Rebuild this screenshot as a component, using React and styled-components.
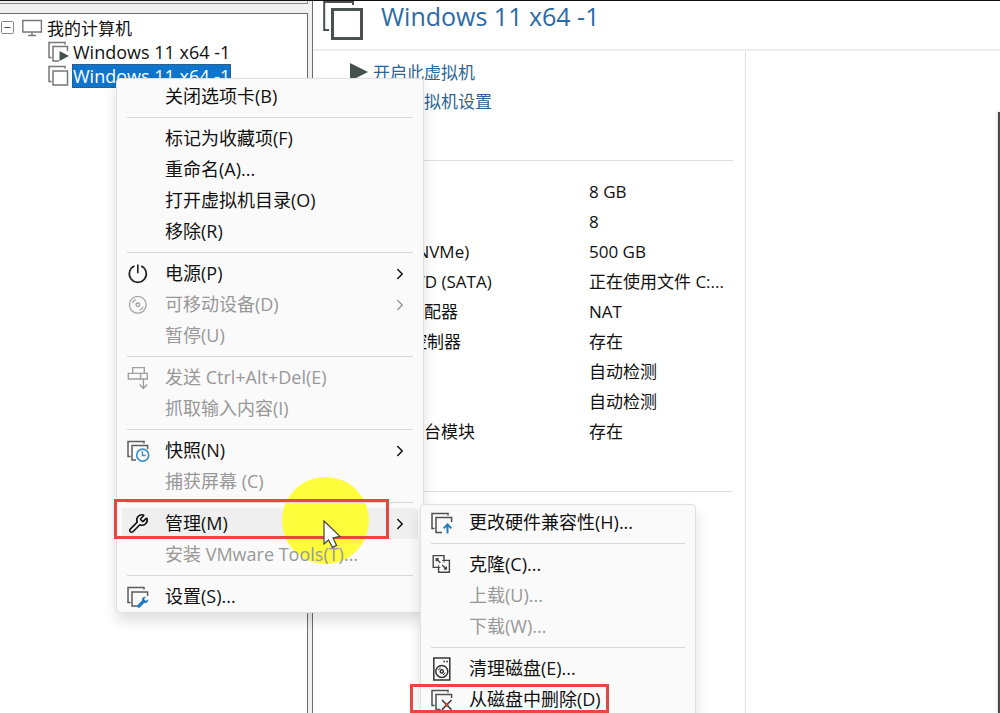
import styled, { createGlobalStyle, css } from 'styled-components';
import { ChevronRight, Wrench } from 'lucide-react';

const GlobalStyle = createGlobalStyle`
  * {
    box-sizing: border-box;
  }

  body {
    margin: 0;
    overflow: hidden;
    background: #ffffff;
    color: #111111;
    font-family: 'Open Sans', 'Noto Sans CJK SC', sans-serif;
    font-size: 17px;
  }

  button {
    font: inherit;
    color: inherit;
    border: 0;
    background: none;
    padding: 0;
    text-align: left;
  }

  ul {
    list-style: none;
    margin: 0;
    padding: 0;
  }

  svg {
    display: block;
    flex: none;
    overflow: visible;
  }
`;

const Window = styled.div`
  position: relative;
  display: flex;
  height: 100vh;
  border-top: 1px solid #111111;
`;

// Library (left side)
const Sidebar = styled.aside`
  display: flex;
  flex-direction: column;
  flex: 0 0 313px;
  padding-right: 4px;
  background: #f0f0f0;
  border-right: 1px solid #6e6e6e;
`;

const SearchEdge = styled.div`
  height: 3px;
  margin-bottom: 9px;
  border-right: 1px solid #8a8a8a;
  border-bottom: 1px solid #8a8a8a;
`;

const TreePanel = styled.nav`
  flex: 1;
  padding-top: 2px;
  background: #ffffff;
  border-top: 1px solid #6e6e6e;
  border-right: 1px solid #6e6e6e;
`;

const TreeRoot = styled.button`
  display: flex;
  align-items: center;
  height: 24px;
  gap: 6px;
  padding-left: 1px;
`;

const RootName = styled.span`
  padding-bottom: 2px;
`;

const TreeLeaf = styled.button`
  display: flex;
  align-items: center;
  height: 24px;
  gap: 2px;
  padding-left: 48px;
  font-size: 18px;
`;

const LeafName = styled.span`
  padding: 0 1px;
  line-height: 24px;
  white-space: nowrap;

  ${(props) =>
    props.$selected &&
    css`
      background: #0f74cc;
      color: #ffffff;
      outline: 1px dotted #4a4a4a;
      outline-offset: -1px;
    `}
`;

// Virtual machine tab
const Main = styled.main`
  display: flex;
  flex-direction: column;
  flex: 1;
  min-width: 0;
`;

const TabHeader = styled.header`
  display: flex;
  gap: 18px;
  height: 50px;
  padding-left: 10px;
  border-bottom: 2px solid #ececec;
`;

const TabTitle = styled.h1`
  margin: 0;
  font-size: 25px;
  font-weight: 400;
  line-height: 30px;
  color: #2a6ba6;
`;

const TabBody = styled.div`
  display: flex;
  flex: 1;
  min-height: 0;
`;

const Details = styled.section`
  flex: 0 0 433px;
  padding: 6px 12px 0 36px;
  border-right: 1px solid #e2e2e2;
`;

const Actions = styled.div`
  display: flex;
  flex-direction: column;
  height: 104px;
  border-bottom: 1px solid #dedede;
`;

const ActionLink = styled.a`
  display: flex;
  align-items: center;
  gap: 4px;
  height: 29px;
  color: #2b6598;
  text-decoration: none;
`;

const DeviceTable = styled.table`
  width: 100%;
  margin-top: 16px;
  border-collapse: collapse;
  table-layout: fixed;

  th,
  td {
    height: 30px;
    padding: 0;
    font-weight: 400;
    line-height: 30px;
    text-align: left;
    white-space: nowrap;
  }

  th {
    width: 240px;
    padding-left: 24px;
  }
`;

const Divider = styled.hr`
  height: 1px;
  margin: 44px 0 0;
  border: 0;
  background: #dedede;
`;

const Preview = styled.section`
  display: flex;
  flex: 1;
  justify-content: flex-end;
  padding-top: 61px;
`;

const PreviewScreen = styled.div`
  width: 2px;
  background: #484c4e;
  box-shadow: 0 0 3px rgba(0, 0, 0, 0.3);
`;

// Menus
const Menu = styled.ul`
  position: absolute;
  z-index: 2;
  padding-top: 2px;
  background: #fafafa;
  border: 1px solid #e0e0e0;
  border-radius: 4px;
  font-size: 18px;
  box-shadow: 0 8px 14px rgba(0, 0, 0, 0.13);
`;

const ContextMenu = styled(Menu)`
  top: 77px;
  left: 116px;
  width: 308px;
`;

const SubMenu = styled(Menu)`
  top: -4px;
  left: 303px;
  width: 276px;
`;

const MenuRow = styled.li`
  position: relative;
  padding: 0 5px;
`;

const MenuButton = styled.button`
  display: flex;
  align-items: center;
  gap: 16px;
  width: 100%;
  height: 31px;
  padding: 0 9px 0 5px;
  white-space: nowrap;

  &:disabled {
    color: #989898;
  }
`;

const IconSlot = styled.span`
  display: flex;
  justify-content: center;
  flex: 0 0 22px;
`;

const MenuLabel = styled.span`
  flex: 1;
  padding-bottom: 3px;
`;

const Separator = styled.li`
  height: 1px;
  margin: 5px 10px;
  background: #d6d6d6;
`;

// Sits under the row's text, like the spotlight
const ActiveFill = styled.span`
  position: absolute;
  z-index: -1;
  inset: 0 5px;
  border-radius: 4px;
  background: #efefef;
`;

const Spotlight = styled.span`
  position: absolute;
  z-index: -1;
  top: -31px;
  left: 165px;
  width: 87px;
  height: 87px;
  border-radius: 50%;
  background: #fdfd3c;
  pointer-events: none;
`;

const Frame = styled.span`
  position: absolute;
  z-index: 4;
  border: 3px solid #ea4540;
  pointer-events: none;
`;

const ManageFrame = styled(Frame)`
  top: -9px;
  left: -3px;
  width: 275px;
  height: 40px;
`;

const DeleteFrame = styled(Frame)`
  top: 0;
  left: -11px;
  width: 199px;
  height: 29px;
`;

const Pointer = styled.svg`
  position: absolute;
  z-index: 5;
  top: 12px;
  left: 206px;
  pointer-events: none;
`;

// Icons
const Pages = ({ inner = 'M5 6H21V21H5Z', color = '#5c5c5c', children }) => (
  <svg width="22" height="22" viewBox="0 0 22 22" fill="none" stroke={color} strokeWidth="1.5">
    <path d="M17 3.6V1.6H1V16.5H3.6" />
    <path d={inner} />
    {children}
  </svg>
);

const RunningIcon = () => (
  <Pages inner="M11 20H5V5.6H19.5V10" color="#777777">
    <path d="M11.5 10V20L21 15Z" fill="#46504d" stroke="none" />
  </Pages>
);

const StoppedIcon = () => <Pages inner="M5 6H19.5V20H5Z" color="#777777" />;

const SnapshotIcon = () => (
  <Pages inner="M9 20H5V5.5H20.6V9">
    <circle cx="15.7" cy="15.2" r="6" stroke="#3f93c9" strokeWidth="1.7" />
    <path d="M15.4 11.2V15.6H18.8" stroke="#3f93c9" />
  </Pages>
);

const SettingsIcon = () => (
  <Pages inner="M10.5 20H5V6H20.6V10">
    <path
      d="M10.4 19.2L15 14.6C14.6 12.2 16.4 10.4 19 10.9L17 13L19 15L21.2 13C21.6 15.6 19.6 17.6 17.2 17L12.8 21.4C11.2 22.6 9 20.8 10.4 19.2Z"
      fill="#1f7bc8"
      stroke="none"
    />
  </Pages>
);

const HardwareIcon = () => (
  <Pages inner="M11 20.4H5V5.6H20.6V10" color="#505050">
    <path d="M16.5 21.5V13M12.7 16.4L16.5 12.4L20.3 16.4" stroke="#1f7bc0" strokeWidth="2" />
  </Pages>
);

const DeleteIcon = () => (
  <Pages inner="M9.5 20.4H5V5.6H20.6V9" color="#505050">
    <path d="M11 11L20.5 20.8M20.5 11L11 20.8" stroke="#333333" strokeWidth="1.5" />
    <path d="M14.2 14.2L17.3 17.4M17.3 14.2L14.2 17.4" stroke="#d33a30" strokeWidth="1.8" />
  </Pages>
);

const PowerIcon = () => (
  <svg width="22" height="22" viewBox="0 0 22 22" fill="none" stroke="#222222" strokeWidth="1.6">
    <path d="M7.4 3.1A8.5 8.5 0 1 0 14.2 3.1M10.8 1.4V10.3" />
  </svg>
);

const DiscIcon = () => (
  <svg width="22" height="22" viewBox="0 0 22 22" fill="none" stroke="#a0a0a0" strokeWidth="1.3">
    <circle cx="10.8" cy="10.8" r="8.4" />
    <circle cx="10.8" cy="10.8" r="1.8" />
    <path d="M5.5 9A5.6 5.6 0 0 1 9 5.5M16.1 12.6A5.6 5.6 0 0 1 12.6 16.1" />
  </svg>
);

const SendKeysIcon = () => (
  <svg width="22" height="22" viewBox="0 0 22 22" fill="none" stroke="#a0a0a0" strokeWidth="1.4">
    <path d="M5.7 0.6H17.3V6.4H5.7ZM1.3 6.4H20.3V12H1.3ZM13.6 6.4V12M16.4 12V21.2M12.6 17.6L16.4 21.4L20.2 17.6" />
  </svg>
);

const CloneIcon = () => (
  <svg width="22" height="22" viewBox="0 0 22 22" fill="none" stroke="#444444" strokeWidth="1.4">
    <path d="M7.6 13.4H2.2V1.6H13V6.4H18.4V18.2H7.6V13.4" />
    <path d="M7.6 13.4V11.2M13 6.4V8.6M7.6 13.4H9.4M13 6.4H11.2" strokeWidth="1" />
    <path d="M5.2 7.2V4.6H7.8M5.4 4.8L9.4 8.8M15.4 12.6V15.2H12.8M15.2 15L11.2 11" strokeWidth="1.3" />
  </svg>
);

const CleanDiskIcon = () => (
  <svg width="22" height="24" viewBox="0 0 22 24" fill="none" stroke="#333333" strokeWidth="1.5">
    <path d="M2.8 1H18.8V23H2.8Z" />
    <circle cx="10.8" cy="14.4" r="6" />
    <circle cx="10.8" cy="14.4" r="1.6" />
    <path d="M7.4 13.2A3.6 3.6 0 0 1 9.6 11M14.2 15.6A3.6 3.6 0 0 1 12 17.8" strokeWidth="1" />
    <path d="M12.4 4.4H14M15.4 4.4H17" />
  </svg>
);

const MinusBox = () => (
  <svg width="14" height="14" viewBox="0 0 14 14" fill="none" stroke="#858585">
    <rect x="0.5" y="0.5" width="12" height="12" rx="1" />
    <path d="M3.5 6.5H9.5" stroke="#444444" />
  </svg>
);

const MonitorIcon = () => (
  <svg width="20" height="18" viewBox="-1 0 20 18" fill="none" stroke="#777777" strokeWidth="1.4">
    <path d="M0.8 1.5H19.4V13H0.8ZM10 13V16.5M6 16.5H14" />
  </svg>
);

const TabIcon = () => (
  <svg width="40" height="40" viewBox="0 0 40 40" fill="none" stroke="#4a514e">
    <path d="M30 4V1H1.2V29H6" strokeWidth="2" />
    <rect x="9.5" y="8.5" width="29" height="29" strokeWidth="3" />
  </svg>
);

const devices = [
  ['内存', '8 GB'],
  ['处理器', '8'],
  ['硬盘 (NVMe)', '500 GB'],
  ['CD/DVD (SATA)', '正在使用文件 C:...'],
  ['网络适配器', 'NAT'],
  ['USB 控制器', '存在'],
  ['声卡', '自动检测'],
  ['显示器', '自动检测'],
  ['可信平台模块', '存在'],
];

const manageItems = [
  { label: '更改硬件兼容性(H)...', icon: <HardwareIcon /> },
  null,
  { label: '克隆(C)...', icon: <CloneIcon /> },
  { label: '上载(U)...', disabled: true },
  { label: '下载(W)...', disabled: true },
  null,
  { label: '清理磁盘(E)...', icon: <CleanDiskIcon /> },
  { label: '从磁盘中删除(D)', icon: <DeleteIcon />, overlay: <DeleteFrame /> },
];

const menuItems = [
  { label: '关闭选项卡(B)' },
  null,
  { label: '标记为收藏项(F)' },
  { label: '重命名(A)...' },
  { label: '打开虚拟机目录(O)' },
  { label: '移除(R)' },
  null,
  { label: '电源(P)', icon: <PowerIcon />, arrow: true },
  { label: '可移动设备(D)', icon: <DiscIcon />, arrow: true, disabled: true },
  { label: '暂停(U)', disabled: true },
  null,
  { label: '发送 Ctrl+Alt+Del(E)', icon: <SendKeysIcon />, disabled: true },
  { label: '抓取输入内容(I)', disabled: true },
  null,
  { label: '快照(N)', icon: <SnapshotIcon />, arrow: true },
  { label: '捕获屏幕 (C)', disabled: true },
  null,
  {
    label: '管理(M)',
    icon: <Wrench size={21} strokeWidth={1.8} />,
    arrow: true,
    overlay: (
      <>
        <ActiveFill />
        <Spotlight />
        <SubMenu role="menu">
          <MenuItems items={manageItems} />
        </SubMenu>
        <ManageFrame />
        <Pointer width="18" height="28" viewBox="0 0 18 28">
          <path
            d="M1 1V24L5.5 20L9.5 27.4L13.6 25.4L10 18L17 16.4Z"
            fill="#ffffff"
            stroke="#444444"
            strokeWidth="1.2"
          />
        </Pointer>
      </>
    ),
  },
  { label: '安装 VMware Tools(T)...', disabled: true },
  null,
  { label: '设置(S)...', icon: <SettingsIcon /> },
];

function MenuItems({ items }) {
  return items.map((item, index) =>
    item ? (
      <MenuRow key={index} role="none">
        <MenuButton type="button" role="menuitem" disabled={item.disabled}>
          <IconSlot>{item.icon}</IconSlot>
          <MenuLabel>{item.label}</MenuLabel>
          {item.arrow && <ChevronRight size={18} strokeWidth={2} />}
        </MenuButton>
        {item.overlay}
      </MenuRow>
    ) : (
      <Separator key={index} role="separator" />
    )
  );
}

const App = () => (
  <>
    <GlobalStyle />
    <Window>
      <Sidebar>
        <SearchEdge />
        <TreePanel>
          <TreeRoot type="button">
            <MinusBox />
            <MonitorIcon />
            <RootName>我的计算机</RootName>
          </TreeRoot>
          <ul>
            <li>
              <TreeLeaf type="button">
                <RunningIcon />
                <LeafName>Windows 11 x64 -1</LeafName>
              </TreeLeaf>
            </li>
            <li>
              <TreeLeaf type="button">
                <StoppedIcon />
                <LeafName $selected>Windows 11 x64 -1</LeafName>
              </TreeLeaf>
            </li>
          </ul>
        </TreePanel>
      </Sidebar>

      <Main>
        <TabHeader>
          <TabIcon />
          <TabTitle>Windows 11 x64 -1</TabTitle>
        </TabHeader>
        <TabBody>
          <Details>
            <Actions>
              <ActionLink href="#power-on">
                <svg width="20" height="20" viewBox="0 0 20 20">
                  <path d="M1 1V19L19 10Z" fill="#46504d" />
                </svg>
                开启此虚拟机
              </ActionLink>
              <ActionLink href="#settings">
                <svg width="20" height="20" viewBox="0 0 20 20" fill="none" stroke="#46504d">
                  <path d="M2 2H18V18H2Z" />
                </svg>
                编辑虚拟机设置
              </ActionLink>
            </Actions>
            <DeviceTable>
              <tbody>
                {devices.map(([name, value]) => (
                  <tr key={name}>
                    <th scope="row">{name}</th>
                    <td>{value}</td>
                  </tr>
                ))}
              </tbody>
            </DeviceTable>
            <Divider />
          </Details>
          <Preview>
            <PreviewScreen />
          </Preview>
        </TabBody>
      </Main>

      <ContextMenu role="menu">
        <MenuItems items={menuItems} />
      </ContextMenu>
    </Window>
  </>
);

export default App;
